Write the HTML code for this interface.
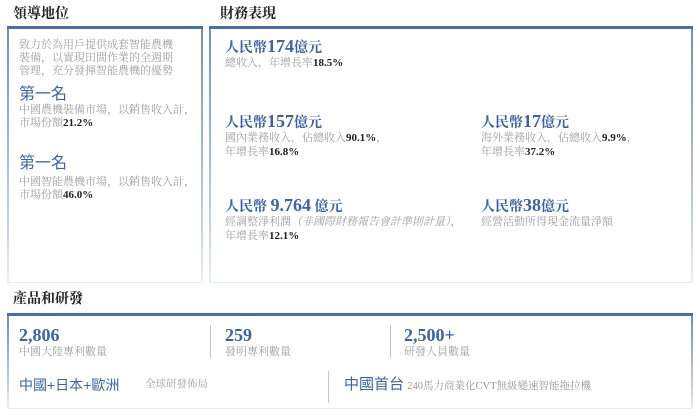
<!DOCTYPE html>
<html><head><meta charset="utf-8"><style>
*{margin:0;padding:0;box-sizing:border-box}
body{width:700px;height:416px;background:#fff;position:relative;overflow:hidden;font-family:"Liberation Serif","Noto Serif CJK SC","Noto Sans CJK TC",serif;color:#999}
.a{position:absolute;white-space:nowrap}
.h{font-size:14px;line-height:18px;font-weight:bold;color:#222}
.box{position:absolute;border-top:3px solid #4a6ea8;background:#fff}
.box:before,.box:after{content:"";position:absolute;top:0;bottom:0;width:2px;background:linear-gradient(#6f8fc0,#c9d4e6 80%,#eef1f6)}
.box:before{left:0}.box:after{right:0}
.box .bb{position:absolute;left:0;right:0;bottom:0;height:1px;background:#e6e9ef}
.s{font-size:11px;line-height:14px;color:#a0a0a0}
.s b{color:#222}
.big{font-size:14px;line-height:20px;color:#3a63a6;font-weight:bold}
.big b{font-size:18px}
.blue{color:#3a63a6}
.dv{position:absolute;width:1px;background:#b7c6de}
</style></head><body>
<div class="a h" style="left:13px;top:6px">領導地位</div>
<div class="a h" style="left:220px;top:6px">財務表現</div>
<div class="box" style="left:7px;top:26px;width:196px;height:257px"><div class="bb"></div></div>
<div class="box" style="left:209px;top:26px;width:484px;height:257px"><div class="bb"></div></div>

<div class="a s" style="left:19px;top:39px;line-height:12.8px">致力於為用戶提供成套智能農機<br>裝備，以實現田間作業的全週期<br>管理，充分發揮智能農機的優勢</div>
<div class="a blue" style="left:19px;top:85px;font-size:16px;line-height:20px;font-family:'Liberation Sans','Noto Sans CJK TC',sans-serif">第一名</div>
<div class="a s" style="left:19px;top:104px;line-height:13px">中國農機裝備市場，以銷售收入計，<br>市場份額<b>21.2%</b></div>
<div class="a blue" style="left:19px;top:154px;font-size:16px;line-height:20px;font-family:'Liberation Sans','Noto Sans CJK TC',sans-serif">第一名</div>
<div class="a s" style="left:19px;top:176px;line-height:13px">中國智能農機市場，以銷售收入計，<br>市場份額<b>46.0%</b></div>

<div class="a big" style="left:225px;top:36px">人民幣<b>174</b>億元</div>
<div class="a s" style="left:225px;top:56px">總收入，年增長率<b>18.5%</b></div>
<div class="a big" style="left:225px;top:111px">人民幣<b>157</b>億元</div>
<div class="a s" style="left:225px;top:131px">國內業務收入，佔總收入<b>90.1%</b>，<br>年增長率<b>16.8%</b></div>
<div class="a big" style="left:481px;top:111px">人民幣<b>17</b>億元</div>
<div class="a s" style="left:481px;top:131px">海外業務收入，佔總收入<b>9.9%</b>，<br>年增長率<b>37.2%</b></div>
<div class="a big" style="left:225px;top:195px">人民幣 <b>9.764</b> 億元</div>
<div class="a s" style="left:225px;top:215px">經調整淨利潤<i>（非國際財務報告會計準則計量）</i>，<br>年增長率<b>12.1%</b></div>
<div class="a big" style="left:481px;top:195px">人民幣<b>38</b>億元</div>
<div class="a s" style="left:481px;top:215px">經營活動所得現金流量淨額</div>

<div class="a h" style="left:13px;top:291px">產品和研發</div>
<div class="box" style="left:7px;top:313px;width:686px;height:96px"><div class="bb"></div></div>
<div class="a blue" style="left:19px;top:324px;font-size:18px;line-height:22px;font-weight:bold">2,806</div>
<div class="a s" style="left:19px;top:345px">中國大陸專利數量</div>
<div class="dv" style="left:210px;top:325px;height:33px"></div>
<div class="a blue" style="left:225px;top:324px;font-size:18px;line-height:22px;font-weight:bold">259</div>
<div class="a s" style="left:225px;top:345px">發明專利數量</div>
<div class="dv" style="left:390px;top:325px;height:33px"></div>
<div class="a blue" style="left:404px;top:324px;font-size:18px;line-height:22px;font-weight:bold">2,500+</div>
<div class="a s" style="left:404px;top:345px">研發人員數量</div>
<div class="a blue" style="left:19px;top:375px;font-size:14px;line-height:20px;font-family:'Liberation Sans','Noto Sans CJK TC',sans-serif">中國+日本+歐洲</div>
<div class="a s" style="left:145px;top:378px;font-size:10.5px">全球研發佈局</div>
<div class="dv" style="left:328px;top:371px;height:32px"></div>
<div class="a" style="left:344px;top:375px;font-size:13px;line-height:20px;color:#999"><span class="blue" style="font-size:15px;font-family:'Liberation Sans','Noto Sans CJK TC',sans-serif">中國首台</span> <span style="font-size:10.5px">240馬力商業化CVT無級變速智能拖拉機</span></div>
</body></html>
